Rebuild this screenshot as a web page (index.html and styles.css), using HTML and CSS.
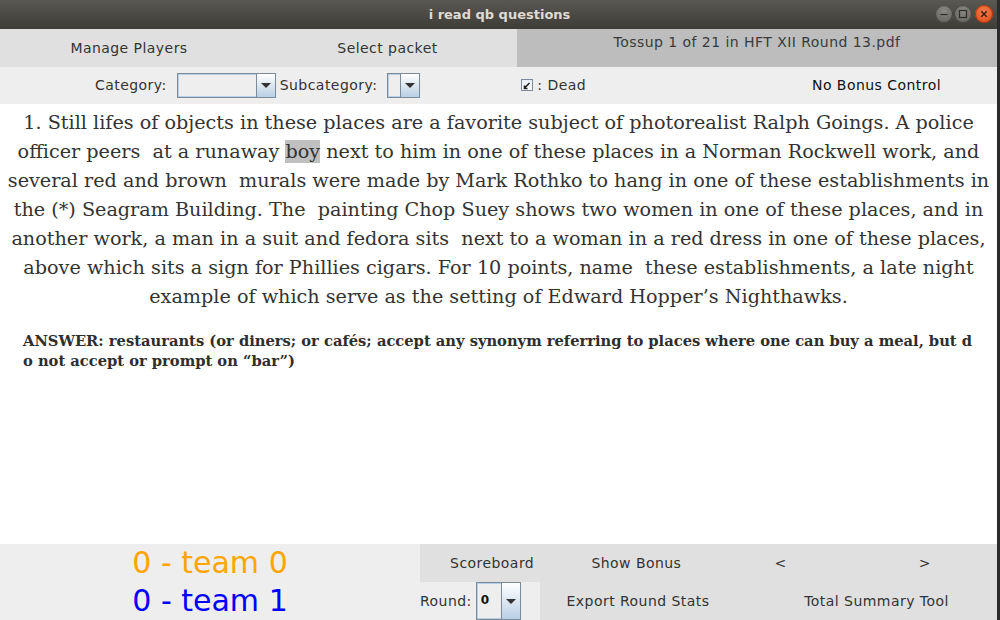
FILE: index.html
```html
<!DOCTYPE html>
<html>
<head>
<meta charset="utf-8">
<link rel="stylesheet" href="styles.css">
</head>
<body>
<div class="window">
  <div class="titlebar">
    <div class="title">i read qb questions</div>
    <div class="wbtns">
      <span class="wbtn gray"><svg width="16" height="16" viewBox="0 0 16 16"><path d="M4.5 8.5h7" stroke="#2e2d2a" stroke-width="1.2"/></svg></span>
      <span class="wbtn gray"><svg width="16" height="16" viewBox="0 0 16 16"><rect x="4.5" y="4.5" width="7" height="7" fill="none" stroke="#2e2d2a" stroke-width="1.2"/></svg></span>
      <span class="wbtn close"><svg width="16" height="16" viewBox="0 0 16 16"><path d="M5.3 5.3l5.4 5.4M10.7 5.3l-5.4 5.4" stroke="#3a1a0c" stroke-width="1.4"/></svg></span>
    </div>
  </div>
  <div class="tabs">
    <div class="tab t1">Manage Players</div>
    <div class="tab t2">Select packet</div>
    <div class="tab t3">Tossup 1 of 21 in HFT XII Round 13.pdf</div>
  </div>
  <div class="filters">
    <span class="lbl cat">Category:</span>
    <span class="combo wide"><span class="field"></span><span class="arrow"><i></i></span></span>
    <span class="lbl sub">Subcategory:</span>
    <span class="combo narrow"><span class="field"></span><span class="arrow"><i></i></span></span>
    <span class="dead"><span class="check"><svg width="10" height="10" viewBox="0 0 10 10"><path d="M2 8.5L7.5 3M2.5 5.5v3h3" fill="none" stroke="#222" stroke-width="1.6"/></svg></span><span>: Dead</span></span>
    <span class="bonus">No Bonus Control</span>
  </div>
  <div class="content">
    <p class="question">1. Still lifes of objects in these places are a favorite subject of photorealist Ralph Goings. A police<br>officer peers&nbsp; at a runaway <span class="hl">boy</span> next to him in one of these places in a Norman Rockwell work, and<br>several red and brown&nbsp; murals were made by Mark Rothko to hang in one of these establishments in<br>the (*) Seagram Building. The&nbsp; painting Chop Suey shows two women in one of these places, and in<br>another work, a man in a suit and fedora sits&nbsp; next to a woman in a red dress in one of these places,<br>above which sits a sign for Phillies cigars. For 10 points, name&nbsp; these establishments, a late night<br>example of which serve as the setting of Edward Hopper’s Nighthawks.</p>
    <p class="answer">ANSWER: restaurants (or diners; or cafés; accept any synonym referring to places where one can buy a meal, but d<br>o not accept or prompt on “bar”)</p>
  </div>
  <div class="bottom">
    <div class="scores">
      <div class="score orange">0 - team 0</div>
      <div class="score blue">0 - team 1</div>
    </div>
    <div class="controls">
      <div class="row1">
        <div class="btn">Scoreboard</div>
        <div class="btn">Show Bonus</div>
        <div class="btn">&lt;</div>
        <div class="btn">&gt;</div>
      </div>
      <div class="row2">
        <div class="round"><span>Round:</span><span class="combo small"><span class="field">0</span><span class="arrow"><i></i></span></span></div>
        <div class="btn export">Export Round Stats</div>
        <div class="btn total">Total Summary Tool</div>
      </div>
    </div>
  </div>
</div>
</body>
</html>
```
FILE: styles.css
```css
html, body {
  margin: 0;
  padding: 0;
  background: #2b2b2b;
}
.window {
  width: 997px;
  height: 620px;
  overflow: hidden;
  display: flex;
  flex-direction: column;
  font-family: "DejaVu Sans", sans-serif;
  font-size: 14px;
  letter-spacing: 0.45px;
  color: #333;
  background: #eeeeee;
}
.titlebar {
  height: 29px;
  flex: none;
  background: linear-gradient(#5a5852, #3d3c37);
  display: flex;
  align-items: center;
  justify-content: center;
  position: relative;
}
.title {
  color: #dfdbd2;
  font-weight: bold;
  font-size: 13px;
  letter-spacing: 0;
  padding-left: 2px;
}
.wbtns {
  position: absolute;
  right: 4px;
  top: 5px;
  display: flex;
  gap: 1px;
}
.wbtn {
  width: 18px;
  height: 18px;
  border-radius: 50%;
  display: flex;
  align-items: center;
  justify-content: center;
}
.wbtn.close { margin-left: 2px; }
.wbtn.gray {
  background: radial-gradient(circle at 50% 35%, #8a8984, #5c5b57);
  box-shadow: inset 0 0 0 1px #45443f;
}
.wbtn.close {
  background: radial-gradient(circle at 50% 35%, #f47a4a, #dd4814);
  box-shadow: inset 0 0 0 1px #a8360c;
}
.tabs {
  height: 38px;
  flex: none;
  display: flex;
  background: #e0e0e0;
}
.tab {
  display: flex;
  align-items: center;
  justify-content: center;
  color: #333;
}
.t1 { width: 258px; }
.t2 { width: 259px; }
.t3 {
  flex: 1;
  background: #bdbdbd;
  align-items: flex-start;
  padding-top: 5px;
  color: #3a3a3a;
}
.filters {
  height: 37px;
  flex: none;
  display: flex;
  align-items: center;
  padding-bottom: 1px;
  box-sizing: border-box;
  color: #333;
}
.lbl.cat { margin-left: 95px; margin-right: 10px; }
.lbl.sub { margin-left: 4px; margin-right: 10px; }
.combo {
  display: flex;
  height: 25px;
  box-sizing: border-box;
  border: 1px solid #7a8a99;
  background: #eeeeee;
}
.combo .field {
  flex: 1;
  border: 1px solid #b8cfe5;
  border-right: none;
  background: #eeeeee;
}
.combo .arrow {
  width: 18px;
  border-left: 1px solid #7a8a99;
  background: linear-gradient(#ffffff, #b8cfe5);
  display: flex;
  align-items: center;
  justify-content: center;
}
.combo .arrow i {
  width: 0;
  height: 0;
  border-left: 5px solid transparent;
  border-right: 5px solid transparent;
  border-top: 5px solid #333;
}
.combo.wide { width: 99px; }
.combo.narrow { width: 33px; }
.dead {
  display: flex;
  align-items: center;
  gap: 4px;
  margin-left: 101px;
}
.check {
  width: 12px;
  height: 12px;
  box-sizing: border-box;
  border: 1px solid #7a8a99;
  background: linear-gradient(#e6eef6, #ffffff);
  display: flex;
  align-items: center;
  justify-content: center;
}
.bonus {
  margin-left: auto;
  margin-right: 56px;
  color: #111;
}
.content {
  background: #ffffff;
  height: 440px;
  flex: none;
  padding-top: 4px;
  box-sizing: border-box;
  letter-spacing: 0;
}
.question {
  margin: 0;
  font-family: "DejaVu Serif", serif;
  font-size: 19.2px;
  line-height: 29px;
  text-align: center;
  color: #333;
  white-space: nowrap;
}
.hl { background: #c0c0c0; }
.answer {
  margin: 20px 0 0 23px;
  font-family: "DejaVu Serif", serif;
  font-weight: bold;
  font-size: 14.7px;
  line-height: 20px;
  color: #2e2e2e;
  white-space: nowrap;
}
.bottom {
  flex: 1;
  display: flex;
}
.scores {
  width: 420px;
  display: flex;
  flex-direction: column;
  align-items: center;
  justify-content: center;
  font-size: 30px;
  line-height: 38px;
  letter-spacing: 0;
}
.orange { color: #ffa500; }
.blue { color: #0000ff; }
.controls {
  flex: 1;
  display: flex;
  flex-direction: column;
}
.row1, .row2 {
  height: 38px;
  display: flex;
}
.btn {
  background: #e0e0e0;
  display: flex;
  align-items: center;
  justify-content: center;
  color: #333;
}
.row1 .btn { flex: 1; }
.round {
  width: 120px;
  display: flex;
  align-items: center;
  gap: 4px;
  color: #333;
}
.combo.small {
  width: 45px;
  height: 38px;
}
.combo.small .field {
  font-weight: bold;
  font-size: 12px;
  letter-spacing: 0;
  color: #111;
  padding: 9px 0 0 3px;
}
.export { width: 196px; }
.total { flex: 1; padding-left: 20px; }
```
